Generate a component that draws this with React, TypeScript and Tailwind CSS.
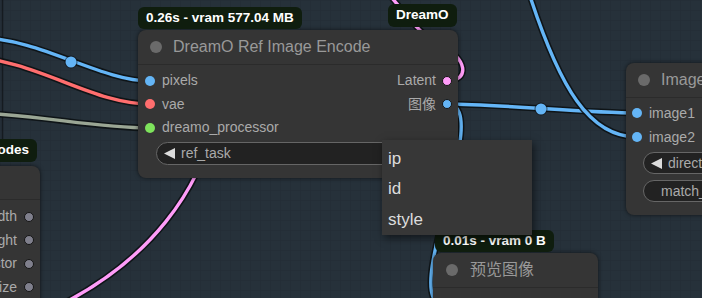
import React from "react";

const font = "font-['Liberation_Sans','Noto_Sans_CJK_SC',sans-serif]";

const Dot = ({ color, ring }: { color: string; ring?: boolean }) => (
  <span
    className={`block w-[10px] h-[10px] shrink-0 rounded-full ${color} ${
      ring ? "border border-[#151515]" : ""
    }`}
  />
);

const Title = ({ text }: { text: string }) => (
  <div className="flex h-[35px] items-center gap-[11px] border-b border-[#2b2b2b] pl-[12px] whitespace-nowrap">
    <span className="block w-[12px] h-[12px] shrink-0 rounded-full bg-[#6a6a6a]" />
    <span className="text-[16px] text-[#999]">{text}</span>
  </div>
);

const Arrow = () => (
  <svg width="12" height="11" viewBox="0 0 12 11" className="shrink-0">
    <polygon points="0,5.5 11,0 11,11" fill="#dcdcdc" />
  </svg>
);

const Badge = ({ text, className }: { text: string; className: string }) => (
  <div
    className={`absolute flex items-center rounded-md bg-[#0f1d0e] px-[8px] text-[13.5px] font-bold text-white whitespace-nowrap ${className}`}
  >
    {text}
  </div>
);

function Wire({ d, color }: { d: string; color: string }) {
  return (
    <g fill="none" strokeLinecap="round">
      <path d={d} stroke="#0b0f12" strokeOpacity="0.85" strokeWidth="6.5" />
      <path d={d} stroke={color} strokeWidth="3.4" />
    </g>
  );
}

function Knot({ x, y, color }: { x: number; y: number; color: string }) {
  return (
    <g>
      <circle cx={x} cy={y} r="6.5" fill="#0b0f12" fillOpacity="0.6" />
      <circle cx={x} cy={y} r="5.5" fill={color} />
    </g>
  );
}

function Canvas() {
  const blue = "#64b5f6";
  return (
    <svg className="absolute inset-0" width="702" height="298">
      <defs>
        <pattern id="grid" width="10" height="10" patternUnits="userSpaceOnUse">
          <path d="M10 0H0V10" fill="none" stroke="#222c33" strokeWidth="1" />
        </pattern>
      </defs>
      <rect width="702" height="298" fill="url(#grid)" />
      <line x1="2.5" y1="0" x2="2.5" y2="140" stroke="#151b20" strokeWidth="1.5" />

      <Wire d="M -20 38 C 40 38, 100 81, 150 81" color={blue} />
      <Wire d="M -40 55 C 40 60, 90 104, 150 104" color="#ff6e6e" />
      <Wire d="M -40 112 C 40 114, 90 128, 150 128" color="#9aa694" />
      <Knot x={71} y={62} color={blue} />

      <Wire d="M 215 120 C 200 190, 150 260, 60 305" color="#ff9cf9" />
      <Wire
        d="M 447 81 C 470 81, 468 58, 440 45 C 420 36, 405 12, 385 -10"
        color="#ff9cf9"
      />

      <Wire d="M 447 104 C 497 104, 587 113, 637 113" color={blue} />
      <Knot x={541} y={109} color={blue} />
      <Wire d="M 528 -10 C 560 90, 590 137, 637 137" color={blue} />
      <Wire d="M 447 104 C 497 104, 395 305, 445 305" color={blue} />
    </svg>
  );
}

export default function App() {
  return (
    <div
      className={`relative w-[702px] h-[298px] overflow-hidden bg-[#26313a] ${font}`}
    >
      <Canvas />

      {/* left node, mostly off screen */}
      <div className="absolute left-[-120px] top-[166px] w-[160px] h-[150px] rounded-lg bg-[#353535] shadow-[0_0_4px_rgba(0,0,0,0.6)]">
        <div className="h-[34px] border-b border-[#2b2b2b]" />
        <div className="flex flex-col pt-[5px]">
          {["width", "height", "scale_factor", "size"].map((l) => (
            <div
              key={l}
              className="flex h-[23.5px] items-center justify-end gap-[7px] pr-[6px] text-[14px] text-[#aaa]"
            >
              <span>{l}</span>
              <Dot color="bg-[#7f7f8c]" ring />
            </div>
          ))}
        </div>
      </div>
      <Badge text="KJNodes" className="right-[665px] top-[139px] h-[23px]" />

      {/* DreamO Ref Image Encode */}
      <div className="absolute left-[138px] top-[30px] w-[320px] h-[148px] rounded-lg bg-[#353535] shadow-[0_0_4px_rgba(0,0,0,0.6)]">
        <Title text="DreamO Ref Image Encode" />
        <div className="flex flex-col pt-[4px] text-[14px] text-[#aaa]">
          <div className="flex h-[23.5px] items-center justify-between">
            <div className="flex items-center gap-[7px] pl-[7px]">
              <Dot color="bg-[#64b5f6]" />
              <span>pixels</span>
            </div>
            <div className="flex items-center gap-[6px] pr-[6px]">
              <span>Latent</span>
              <Dot color="bg-[#ff9cf9]" ring />
            </div>
          </div>
          <div className="flex h-[23.5px] items-center justify-between">
            <div className="flex items-center gap-[7px] pl-[7px]">
              <Dot color="bg-[#ff6e6e]" />
              <span>vae</span>
            </div>
            <div className="flex items-center gap-[6px] pr-[6px]">
              <span>图像</span>
              <Dot color="bg-[#64b5f6]" ring />
            </div>
          </div>
          <div className="flex h-[23.5px] items-center">
            <div className="flex items-center gap-[7px] pl-[7px]">
              <Dot color="bg-[#7ee35c]" />
              <span>dreamo_processor</span>
            </div>
          </div>
          <div className="mx-[18px] mt-[2.5px] flex h-[23px] items-center justify-between rounded-full border border-[#666] bg-[#222] px-[7px]">
            <div className="flex items-center gap-[5px]">
              <Arrow />
              <span>ref_task</span>
            </div>
            <span className="text-[#ddd]">ip</span>
          </div>
        </div>
      </div>
      <Badge text="0.26s - vram 577.04 MB" className="left-[138px] top-[7px] h-[22px]" />
      <Badge text="DreamO" className="left-[388px] top-[4px] h-[23px] px-[7px]" />

      {/* Image stitch node, right edge */}
      <div className="absolute left-[626px] top-[63px] w-[200px] h-[152px] rounded-lg bg-[#353535] shadow-[0_0_4px_rgba(0,0,0,0.6)]">
        <Title text="Image Stitch" />
        <div className="flex flex-col pt-[3px] text-[14px] text-[#aaa]">
          {["image1", "image2"].map((l) => (
            <div key={l} className="flex h-6 items-center gap-[7px] pl-[6px]">
              <Dot color="bg-[#64b5f6]" />
              <span>{l}</span>
            </div>
          ))}
          <div className="mx-[17px] mt-[3px] flex h-[22px] items-center gap-[5px] rounded-full border border-[#666] bg-[#222] px-[7px] whitespace-nowrap">
            <Arrow />
            <span>direction</span>
          </div>
          <div className="mx-[17px] mt-[6px] flex h-[22px] items-center rounded-full border border-[#666] bg-[#222] pl-[17px] whitespace-nowrap">
            <span>match_image_size</span>
          </div>
        </div>
      </div>

      {/* preview node */}
      <div className="absolute left-[433px] top-[253px] w-[165px] h-[80px] rounded-lg bg-[#353535] shadow-[0_0_4px_rgba(0,0,0,0.6)]">
        <div className="flex h-[35px] items-center gap-[12px] border-b border-[#2b2b2b] pl-[13px]">
          <span className="block w-[12px] h-[12px] rounded-full bg-[#6a6a6a]" />
          <span className="text-[16px] text-[#999]">预览图像</span>
        </div>
      </div>
      <Badge text="0.01s - vram 0 B" className="left-[435px] top-[230px] h-[22px] px-[7px]" />

      {/* combo dropdown */}
      <div className="absolute left-[382px] top-[140px] w-[150px] h-[95px] bg-[#373737] pt-[3px] pl-[6px] text-[17px] text-[#dcdcdc] shadow-[2px_3px_8px_rgba(0,0,0,0.55)]">
        {["ip", "id", "style"].map((o) => (
          <div key={o} className="flex h-[30.5px] items-center">
            {o}
          </div>
        ))}
      </div>
    </div>
  );
}
